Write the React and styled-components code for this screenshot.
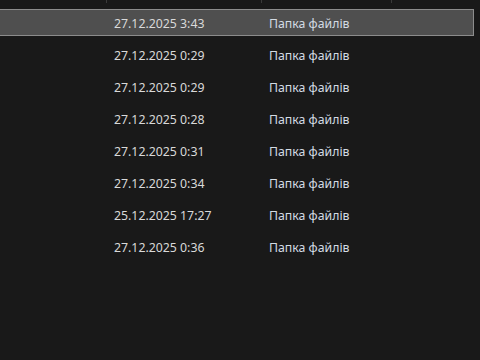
import styled, { createGlobalStyle } from "styled-components";

const GlobalStyle = createGlobalStyle`
  html, body {
    margin: 0;
    padding: 0;
    background: #191919;
  }
  body {
    width: 480px;
    height: 360px;
    overflow: hidden;
    font-family: "Noto Sans", "Open Sans", sans-serif;
  }
`;

const rows = [
  { date: "27.12.2025 3:43", type: "Папка файлів", selected: true },
  { date: "27.12.2025 0:29", type: "Папка файлів" },
  { date: "27.12.2025 0:29", type: "Папка файлів" },
  { date: "27.12.2025 0:28", type: "Папка файлів" },
  { date: "27.12.2025 0:31", type: "Папка файлів" },
  { date: "27.12.2025 0:34", type: "Папка файлів" },
  { date: "25.12.2025 17:27", type: "Папка файлів" },
  { date: "27.12.2025 0:36", type: "Папка файлів" },
];

const App = () => {
  return (
    <Page>
      <GlobalStyle />
      <Header>
        <HeaderCell $width={107} />
        <HeaderCell $width={155} />
        <HeaderCell $width={130} />
        <HeaderCell $width={88} $last />
      </Header>
      <List>
        {rows.map((r, i) => (
          <Row key={i} $selected={r.selected}>
            <NameCell />
            <DateCell>{r.date}</DateCell>
            <TypeCell>{r.type}</TypeCell>
          </Row>
        ))}
      </List>
    </Page>
  );
};

export default App;

const Page = styled.div`
  width: 480px;
  height: 360px;
  background: #191919;
  display: flex;
  flex-direction: column;
`;

const Header = styled.div`
  display: flex;
  height: 3px;
  flex-shrink: 0;
`;

const HeaderCell = styled.div`
  width: ${(p) => p.$width}px;
  box-sizing: border-box;
  border-right: ${(p) => (p.$last ? "none" : "1px solid #3a3a3a")};
`;

const List = styled.div`
  display: flex;
  flex-direction: column;
  gap: 5px;
  margin-top: 6px;
`;

const Row = styled.div`
  display: flex;
  align-items: center;
  height: 27px;
  width: 475px;
  margin-left: -1px;
  padding-top: 2px;
  box-sizing: border-box;
  border: 1px solid ${(p) => (p.$selected ? "#8c8c8c" : "transparent")};
  background: ${(p) => (p.$selected ? "#4f4f4f" : "transparent")};
  font-size: 12.3px;
`;

const NameCell = styled.div`
  width: 114px;
  flex-shrink: 0;
`;

const DateCell = styled.div`
  width: 155px;
  flex-shrink: 0;
  color: #d9d9d9;
  white-space: nowrap;
`;

const TypeCell = styled.div`
  color: #d3dbe3;
  white-space: nowrap;
`;
